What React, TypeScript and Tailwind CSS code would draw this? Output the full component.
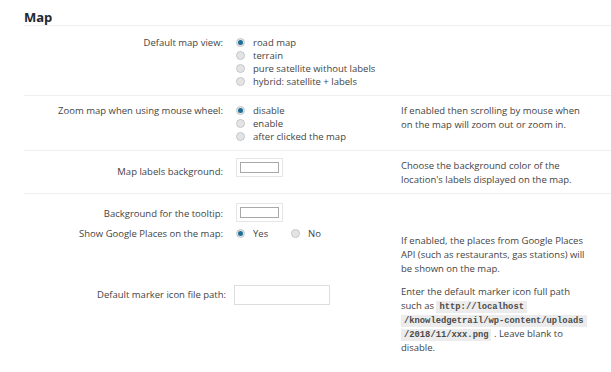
import React from "react";

const Radio: React.FC<{ checked?: boolean }> = ({ checked }) => (
  <span className="inline-flex w-[9px] h-[9px] shrink-0 items-center justify-center rounded-full border border-[#c4c8cc] bg-[#e4e4e4]">
    {checked && <span className="w-[5px] h-[5px] rounded-full bg-[#1f6e96]" />}
  </span>
);

const Swatch: React.FC = () => (
  <div className="flex w-fit p-[3px] border border-[#e6e6e6] bg-white">
    <span className="block w-[39px] h-[11px] border border-[#a8a8a8] bg-white" />
  </div>
);

const Option: React.FC<{ label: string; checked?: boolean }> = ({ label, checked }) => (
  <div className="flex items-center gap-[8px] h-[13px]">
    <Radio checked={checked} />
    <span>{label}</span>
  </div>
);

const Code: React.FC<{ children: React.ReactNode }> = ({ children }) => (
  <code className="font-['Liberation_Mono',monospace] font-bold text-[8.8px] leading-none text-[#4a4a4a] bg-[#ececec] px-[3px] py-[1px]">
    {children}
  </code>
);

export default function App() {
  return (
    <div className="w-[611px] h-[372px] overflow-hidden bg-white font-['Open_Sans',sans-serif] text-[9.5px] text-[#444] leading-[13px]">
      <div className="pl-6">
        <h2 className="pt-[9px] text-[13px] leading-[16px] font-bold text-[#23282d] border-b border-[#efefef]">
          Map
        </h2>

        {/* Default map view */}
        <div className="grid grid-cols-[212px_165px_1fr] pt-[10px] pb-[7px] border-b border-[#efefef]">
          <div className="text-right pr-[13px]">Default map view:</div>
          <div className="col-span-2">
            <Option label="road map" checked />
            <Option label="terrain" />
            <Option label="pure satellite without labels" />
            <Option label="hybrid: satellite + labels" />
          </div>
        </div>

        {/* Zoom by wheel */}
        <div className="grid grid-cols-[212px_165px_1fr] pt-[8px] pb-[7px] border-b border-[#efefef]">
          <div className="text-right pr-[13px]">Zoom map when using mouse wheel:</div>
          <div>
            <Option label="disable" checked />
            <Option label="enable" />
            <Option label="after clicked the map" />
          </div>
          <p className="w-[185px] leading-[14px]">
            If enabled then scrolling by mouse when on the map will zoom out or zoom in.
          </p>
        </div>

        {/* Labels background */}
        <div className="grid grid-cols-[212px_165px_1fr] pt-[7px] pb-[6px] border-b border-[#efefef]">
          <div className="text-right pr-[13px] pt-[7px]">Map labels background:</div>
          <div>
            <Swatch />
          </div>
          <p className="w-[185px] pt-[1px] leading-[14px]">
            Choose the background color of the location's labels displayed on the map.
          </p>
        </div>

        {/* Tooltip background */}
        <div className="grid grid-cols-[212px_165px_1fr] pt-[9px]">
          <div className="text-right pr-[13px] pt-[4px]">Background for the tooltip:</div>
          <div>
            <Swatch />
          </div>
        </div>

        {/* Google Places */}
        <div className="grid grid-cols-[212px_165px_1fr] pt-[5px]">
          <div className="text-right pr-[13px]">Show Google Places on the map:</div>
          <div className="flex items-center gap-[8px] h-[13px]">
            <Radio checked />
            <span className="w-[30px]">Yes</span>
            <Radio />
            <span>No</span>
          </div>
          <p className="w-[190px] pt-[7px] leading-[14px]">
            If enabled, the places from Google Places API (such as restaurants, gas stations) will be shown on the map.
          </p>
        </div>

        {/* Marker icon */}
        <div className="grid grid-cols-[212px_165px_1fr]">
          <div className="text-right pr-[10px] pt-[12px]">Default marker icon file path:</div>
          <div className="-ml-[2px] pt-[9px]">
            <input
              type="text"
              className="block w-[96px] h-[20px] border border-[#dddddd] bg-white outline-none"
            />
          </div>
          <p className="w-[190px] pt-[9px] leading-[14px]">
            Enter the default marker icon full path such as <Code>http://localhost</Code>{" "}
            <Code>/knowledgetrail/wp-content/uploads</Code> <Code>/2018/11/xxx.png</Code> . Leave blank to
            disable.
          </p>
        </div>
      </div>
    </div>
  );
}
